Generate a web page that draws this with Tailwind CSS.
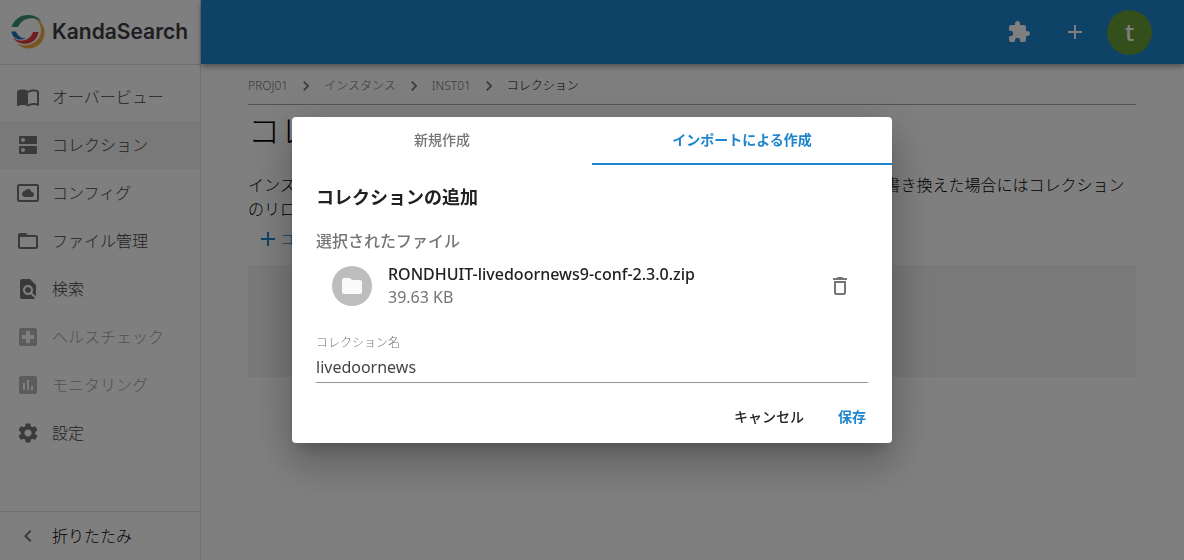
<!DOCTYPE html>
<html lang="ja">
<head>
<meta charset="utf-8">
<meta name="viewport" content="width=device-width, initial-scale=1">
<title>KandaSearch</title>
<script src="https://cdn.jsdelivr.net/npm/@tailwindcss/browser@4"></script>
</head>
<body class="font-['Noto_Sans','Noto_Sans_CJK_JP',sans-serif] font-light text-base bg-white text-black overflow-hidden">
<svg class="hidden" aria-hidden="true">
  <symbol id="chev" viewBox="0 0 24 24"><path d="M10 6 8.59 7.41 13.17 12l-4.58 4.59L10 18l6-6z"/></symbol>
  <symbol id="add" viewBox="0 0 24 24"><path d="M19 13h-6v6h-2v-6H5v-2h6V5h2v6h6v2z"/></symbol>
</svg>
<div class="flex h-screen">
  <aside class="flex w-[201px] shrink-0 flex-col border-r border-[#e0e0e0]">
    <a href="#" class="flex h-[65px] shrink-0 items-center gap-[7px] border-b border-[#e0e0e0] pl-[11px]">
      <svg class="size-[34px] shrink-0" viewBox="0 0 34 34" aria-hidden="true">
        <path fill="#3d9270" d="M.5 12C3 4.500 9.500 0 17 0c6 0 11 2.500 13.500 7C26.500 3.500 22 2.500 17.500 3.500 12.500 4.500 9 7.500 7 12z"/>
        <path fill="#f0ab3c" d="M23 3c6.500 2.500 11 8 10.500 15.500C33 27 26 33.500 17.500 33.500c-5 0-9-2-12-5.500 5 3 11 3 16 .5 5.500-3 8.500-7.500 8.500-13.500 0-5-2.500-9-7-12z"/>
        <path fill="#e13c40" d="M2 22.500c4.500 4 10 4 14.500 1.500 3-1.700 4.500-4 5.500-7h5.500c-1 6-5 10.500-11 11.500C10.500 29.500 5 27.500 2 22.500z"/>
        <path fill="#2373c0" d="M.5 16.500H5c1.500 4 5 7 10 7-6 2.500-13.500 1-14.500-7z"/>
      </svg>
      <span class="font-['Inter',sans-serif] text-[21px] font-semibold leading-8 text-[#3c3c44]">KandaSearch</span>
    </a>
    <nav class="flex-1 py-2 text-[#444]">
      <a href="#" class="flex h-12 items-center gap-3 px-4"><svg class="size-6 fill-[#757575]" viewBox="0 0 24 24"><path d="M21 5c-1.11-.35-2.33-.5-3.5-.5-1.95 0-4.05.4-5.5 1.500-1.450-1.100-3.550-1.500-5.500-1.500S2.450 4.900 1 6v14.650c0 .25.25.5.5.5.1 0 .15-.05.25-.05C3.100 20.450 5.050 20 6.500 20c1.950 0 4.050.4 5.500 1.500 1.350-.85 3.800-1.500 5.500-1.500 1.650 0 3.350.3 4.750 1.050.1.05.15.05.25.05.25 0 .5-.25.5-.5V6c-.6-.45-1.250-.75-2-1zm0 13.500c-1.100-.35-2.300-.5-3.500-.5-1.700 0-4.150.65-5.500 1.500V8c1.350-.85 3.800-1.500 5.500-1.500 1.200 0 2.400.15 3.500.5v11.500z"/></svg>オーバービュー</a>
      <a href="#" aria-current="page" class="flex h-12 items-center gap-3 bg-[#f2f2f2] px-4"><svg class="size-6 fill-[#757575]" viewBox="0 0 24 24"><path d="M20 13H4c-.55 0-1 .45-1 1v6c0 .55.45 1 1 1h16c.55 0 1-.45 1-1v-6c0-.55-.45-1-1-1zM7 19c-1.100 0-2-.9-2-2s.9-2 2-2 2 .9 2 2-.9 2-2 2zM20 3H4c-.55 0-1 .45-1 1v6c0 .55.45 1 1 1h16c.55 0 1-.45 1-1V4c0-.55-.45-1-1-1zM7 9c-1.100 0-2-.9-2-2s.9-2 2-2 2 .9 2 2-.9 2-2 2z"/></svg>コレクション</a>
      <a href="#" class="flex h-12 items-center gap-3 px-4"><svg class="size-6 fill-[#757575]" viewBox="0 0 24 24"><path d="M9 16h6.500c1.380 0 2.500-1.120 2.500-2.500S16.880 11 15.500 11h-.05c-.24-1.690-1.690-3-3.450-3-1.400 0-2.600.83-3.160 2.020h-.16C7.170 10.180 6 11.450 6 13c0 1.660 1.340 3 3 3zM21 3H3c-1.100 0-2 .9-2 2v14c0 1.100.9 2 2 2h18c1.100 0 2-.9 2-2V5c0-1.100-.9-2-2-2zm0 16.010H3V4.990h18v14.020z"/></svg>コンフィグ</a>
      <a href="#" class="flex h-12 items-center gap-3 px-4"><svg class="size-6 fill-[#757575]" viewBox="0 0 24 24"><path d="M20 6h-8l-2-2H4c-1.100 0-1.990.9-1.990 2L2 18c0 1.100.9 2 2 2h16c1.100 0 2-.9 2-2V8c0-1.100-.9-2-2-2zm0 12H4V8h16v10z"/></svg>ファイル管理</a>
      <a href="#" class="flex h-12 items-center gap-3 px-4"><svg class="size-6 fill-[#757575]" viewBox="0 0 24 24"><path d="M20 19.590V8l-6-6H6c-1.100 0-1.990.9-1.990 2L4 20c0 1.100.89 2 1.990 2H18c.45 0 .85-.15 1.190-.4l-4.430-4.430c-.8.52-1.740.83-2.760.83-2.760 0-5-2.240-5-5s2.240-5 5-5 5 2.240 5 5c0 1.020-.31 1.960-.83 2.750L20 19.590zM9 13c0 1.660 1.340 3 3 3s3-1.340 3-3-1.340-3-3-3-3 1.340-3 3z"/></svg>検索</a>
      <a aria-disabled="true" class="flex h-12 items-center gap-3 px-4 opacity-50"><svg class="size-6 fill-[#757575]" viewBox="0 0 24 24"><path d="M19 3H5c-1.100 0-1.990.9-1.990 2L3 19c0 1.100.9 2 2 2h14c1.100 0 2-.9 2-2V5c0-1.100-.9-2-2-2zm-1 11h-4v4h-4v-4H6v-4h4V6h4v4h4v4z"/></svg>ヘルスチェック</a>
      <a aria-disabled="true" class="flex h-12 items-center gap-3 px-4 opacity-50"><svg class="size-6 fill-[#757575]" viewBox="0 0 24 24"><path d="M19 3H5c-1.100 0-2 .9-2 2v14c0 1.100.9 2 2 2h14c1.100 0 2-.9 2-2V5c0-1.100-.9-2-2-2zM9 17H7v-7h2v7zm4 0h-2V7h2v10zm4 0h-2v-4h2v4z"/></svg>モニタリング</a>
      <a href="#" class="flex h-12 items-center gap-3 px-4"><svg class="size-6 fill-[#757575]" viewBox="0 0 24 24"><path d="M19.140 12.940c.04-.3.06-.61.06-.94 0-.32-.02-.64-.07-.94l2.030-1.580c.18-.14.23-.41.12-.61l-1.920-3.320c-.12-.22-.37-.29-.59-.22l-2.390.96c-.5-.38-1.030-.7-1.620-.94l-.36-2.540c-.04-.24-.24-.41-.48-.41h-3.840c-.24 0-.43.17-.47.41l-.36 2.540c-.59.24-1.130.57-1.620.94l-2.390-.96c-.22-.08-.47 0-.59.22L2.740 8.870c-.12.21-.08.47.12.61l2.030 1.580c-.05.3-.09.63-.09.94s.02.64.07.94l-2.030 1.580c-.18.14-.23.41-.12.61l1.920 3.320c.12.22.37.29.59.22l2.390-.96c.5.38 1.030.7 1.620.94l.36 2.540c.05.24.24.41.48.41h3.840c.24 0 .44-.17.47-.41l.36-2.540c.59-.24 1.130-.56 1.620-.94l2.390.96c.22.08.47 0 .59-.22l1.920-3.320c.12-.22.07-.47-.12-.61l-2.010-1.580zM12 15.600c-1.980 0-3.600-1.620-3.600-3.600s1.620-3.600 3.600-3.600 3.600 1.620 3.600 3.600-1.620 3.600-3.600 3.600z"/></svg>設定</a>
    </nav>
    <button class="flex h-[49px] shrink-0 items-center gap-3 border-t border-[#e0e0e0] px-4"><svg class="size-6 fill-[#757575]" viewBox="0 0 24 24"><path d="M15.410 7.410 14 6l-6 6 6 6 1.410-1.410L10.830 12z"/></svg>折りたたみ</button>
  </aside>
  <div class="flex min-w-0 flex-1 flex-col">
    <header class="flex h-16 shrink-0 items-center justify-end bg-[#1c85cc] pr-8 text-white shadow-[0_2px_4px_-1px_rgba(0,0,0,0.2),0_4px_5px_rgba(0,0,0,0.14),0_1px_10px_rgba(0,0,0,0.12)]">
      <button aria-label="拡張機能" class="p-4"><svg class="size-6 fill-white" viewBox="0 0 24 24"><path d="M20.500 11H19V7c0-1.100-.9-2-2-2h-4V3.500C13 2.120 11.880 1 10.500 1S8 2.120 8 3.500V5H4c-1.100 0-1.990.9-1.990 2v3.800H3.500c1.490 0 2.700 1.210 2.700 2.700s-1.210 2.700-2.700 2.700H2V20c0 1.100.9 2 2 2h3.800v-1.500c0-1.490 1.210-2.700 2.700-2.700 1.490 0 2.700 1.210 2.700 2.700V22H17c1.100 0 2-.9 2-2v-4h1.500c1.380 0 2.500-1.120 2.500-2.500S21.880 11 20.500 11z"/></svg></button>
      <button aria-label="追加" class="mr-1 p-4"><svg class="size-6 fill-white"><use href="#add"/></svg></button>
      <button aria-label="アカウント" class="size-[45px] rounded-full bg-[#689f38] text-2xl font-medium leading-none">t</button>
    </header>
    <main class="pt-[10px] pr-12 pl-[47px]">
      <nav aria-label="パンくず" class="flex h-[31px] items-start gap-2 border-b border-[#aaa] text-xs leading-6 text-[#757575]">
        <a href="#">PROJ01</a><svg class="mt-[2px] size-5 fill-[#757575]"><use href="#chev"/></svg>
        <a href="#">インスタンス</a><svg class="mt-[2px] size-5 fill-[#757575]"><use href="#chev"/></svg>
        <a href="#">INST01</a><svg class="mt-[2px] size-5 fill-[#757575]"><use href="#chev"/></svg>
        <span class="text-black">コレクション</span>
      </nav>
      <h1 class="mt-[2px] text-[32px] leading-[48px]">コレクション</h1>
      <p class="mt-[18px] leading-6">インスタンスに登録されているコレクションの一覧を表示します。コンフィグ設定内容を書き換えた場合にはコレクションのリロードが必要です。</p>
      <button class="ml-2 flex h-9 items-center text-sm text-[#1c85cc]"><svg class="size-6 fill-[#1c85cc]"><use href="#add"/></svg>コレクションの追加</button>
      <div class="mt-2 h-28 bg-[#f2f2f2]"></div>
    </main>
  </div>
</div>
<div class="fixed inset-0 z-10 flex items-center justify-center bg-black/50">
  <section role="dialog" aria-modal="true" aria-labelledby="dlg-title" class="w-full max-w-[600px] overflow-hidden rounded bg-white text-[#212121] shadow-[0_11px_15px_-7px_rgba(0,0,0,0.2),0_24px_38px_3px_rgba(0,0,0,0.14),0_9px_46px_8px_rgba(0,0,0,0.12)]">
    <div role="tablist" class="grid h-12 grid-cols-2 text-sm">
      <button role="tab" aria-selected="false" class="border-b-2 border-transparent font-medium text-[#757575]">新規作成</button>
      <button role="tab" aria-selected="true" class="border-b-2 border-[#1c85cc] font-bold text-[#1c85cc]">インポートによる作成</button>
    </div>
    <div class="px-6 pt-4">
      <h2 id="dlg-title" class="text-lg font-bold leading-8">コレクションの追加</h2>
      <h3 class="mt-4 font-medium leading-6 text-[#757575]">選択されたファイル</h3>
      <div class="flex items-center px-4 pt-[10px] pb-2">
        <span class="flex size-10 shrink-0 items-center justify-center rounded-full bg-[#bdbdbd]"><svg class="size-6 fill-[#fafafa]" viewBox="0 0 24 24"><path d="M10 4H4c-1.100 0-1.990.9-1.990 2L2 18c0 1.100.9 2 2 2h16c1.100 0 2-.9 2-2V8c0-1.100-.9-2-2-2h-8l-2-2z"/></svg></span>
        <div class="ml-4 flex-1 font-medium leading-[23px]"><p>RONDHUIT-livedoornews9-conf-2.3.0.zip</p><p class="font-normal text-[#757575]">39.63 KB</p></div>
        <button aria-label="削除"><svg class="size-6 fill-[#757575]" viewBox="0 0 24 24"><path d="M6 19c0 1.100.9 2 2 2h8c1.100 0 2-.9 2-2V7H6v12zM8 9h8v10H8V9zm7.500-5-1-1h-5l-1 1H5v2h14V4z"/></svg></button>
      </div>
      <label for="name" class="mt-[14px] block text-xs leading-6 text-[#757575]">コレクション名</label>
      <input id="name" type="text" value="livedoornews" class="block h-7 w-full border-b border-[#949494] pb-1 text-base font-normal text-[#444] outline-none">
    </div>
    <div class="flex justify-end gap-2 pt-4 pr-[13px] pb-2 text-sm">
      <button class="h-9 px-[13px] font-medium">キャンセル</button>
      <button class="h-9 px-[13px] font-bold text-[#1c85cc]">保存</button>
    </div>
  </section>
</div>
</body>
</html>
